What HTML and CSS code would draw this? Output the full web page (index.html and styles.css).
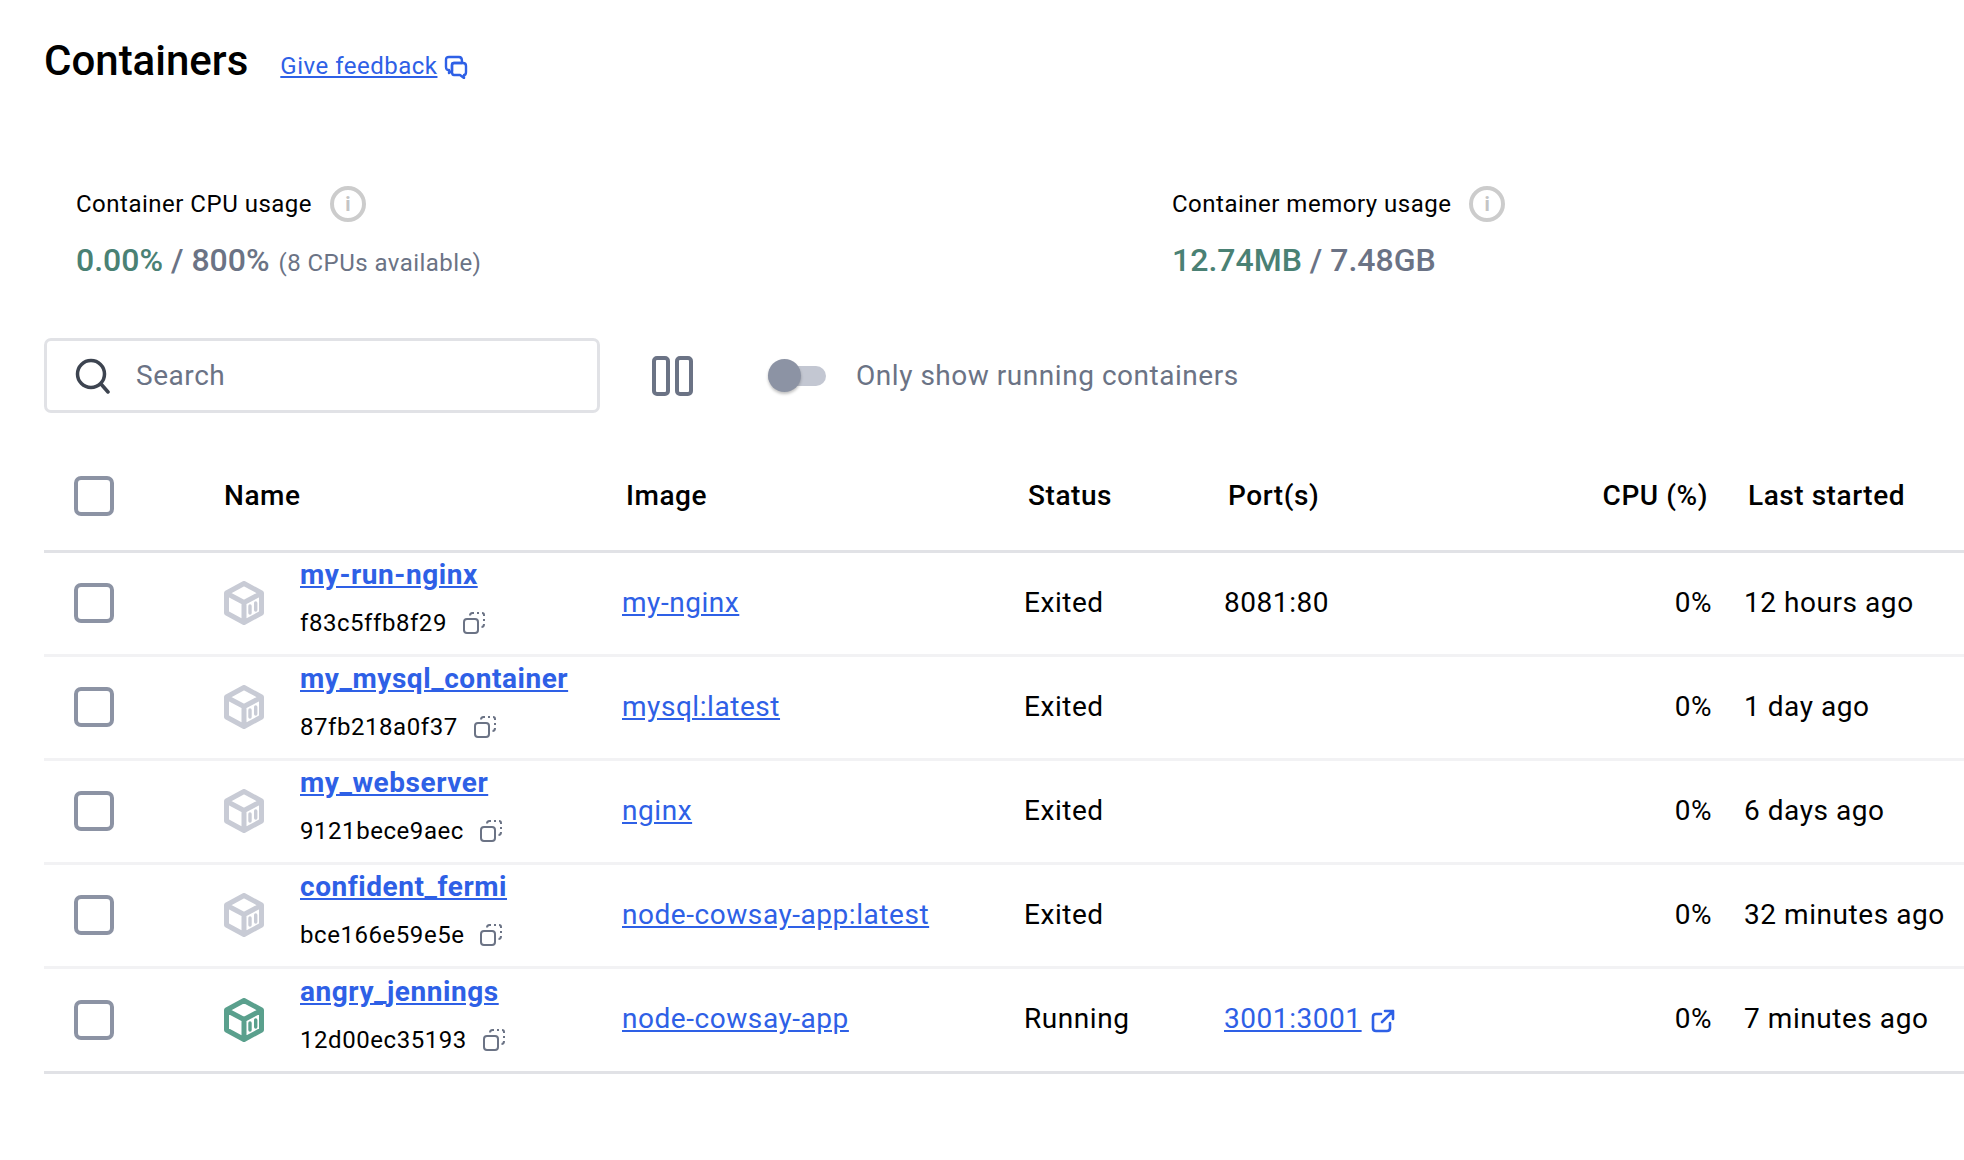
FILE: index.html
```html
<!DOCTYPE html>
<html lang="en">
<head>
  <meta charset="UTF-8" />
  <title>Containers</title>
  <link rel="stylesheet" href="styles.css">
</head>
<body>
  <svg class="defs" width="0" height="0">
    <symbol id="cube" viewBox="0 0 40 44">
      <path d="M20 2.500 L37.500 12 V32 L20 41.500 L2.500 32 V12 Z M3 12.500 L20 21.500 L37 12.500 M20 21.500 V41" fill="none" stroke="currentColor" stroke-width="5" stroke-linejoin="round" />
      <path d="M26 25 V32 M31.700 22 V29" fill="none" stroke="currentColor" stroke-width="3.400" stroke-linecap="round" />
    </symbol>
    <symbol id="copy" viewBox="0 0 22 22">
      <rect x="1" y="7" width="14" height="14" rx="3" fill="none" stroke="currentColor" stroke-width="2" />
      <path d="M7 3.500 C7 2 8 1 9.500 1 H11 M14 1 H16 M19 1 C20.300 1 21 2 21 3 V4 M21 7 V9 M21 12 C21 14 20 15 18.500 15" fill="none" stroke="currentColor" stroke-width="2" />
    </symbol>
  </svg>

  <header class="top">
    <h1>Containers</h1>
    <a class="feedback" href="#">Give feedback</a>
    <svg class="feedback-icon" viewBox="0 0 24 24" width="24" height="24" fill="none" stroke="currentColor" stroke-width="2.400" stroke-linejoin="round">
      <path d="M5 2 H15 C17 2 18 3 18 6 V8 H10 C8.500 8 8 9 8 10 V16 L5 18 V15 C3 15 2 14 2 12 V5 C2 3 3 2 5 2 Z" />
      <path d="M10 8 H19 C21 8 22 9 22 11 V17 C22 19 21 20 20 20 V23 L16 20 H10 C9 20 8 19 8 17 V10 C8 9 9 8 10 8 Z" />
    </svg>
  </header>

  <section class="stats">
    <div class="stat">
      <div class="stat-label">Container CPU usage <span class="info">i</span></div>
      <div class="stat-value"><span class="used">0.00%</span> / 800% <small>(8 CPUs available)</small></div>
    </div>
    <div class="stat">
      <div class="stat-label">Container memory usage <span class="info">i</span></div>
      <div class="stat-value"><span class="used">12.74MB</span> / 7.48GB</div>
    </div>
  </section>

  <section class="toolbar">
    <div class="search">
      <svg viewBox="0 0 36 36" width="36" height="36" fill="none" stroke="#3d4450" stroke-width="3.500" stroke-linecap="round">
        <circle cx="16" cy="16" r="13.500" />
        <path d="M26 26 L33 34" />
      </svg>
      <span>Search</span>
    </div>
    <div class="pause"><i></i><i></i></div>
    <div class="toggle"><i></i></div>
    <span class="toggle-label">Only show running containers</span>
  </section>

  <table class="containers">
    <colgroup>
      <col class="c-check"><col class="c-name"><col class="c-image"><col class="c-status"><col class="c-ports"><col class="c-cpu"><col class="c-last">
    </colgroup>
    <thead>
      <tr>
        <th class="flush"><span class="check"></span></th>
        <th class="flush">Name</th>
        <th>Image</th>
        <th>Status</th>
        <th>Port(s)</th>
        <th class="num">CPU (%)</th>
        <th class="last">Last started</th>
      </tr>
    </thead>
    <tbody>
      <tr>
        <td><span class="check"></span></td>
        <td><div class="name-cell"><svg class="cube"><use href="#cube" /></svg><div class="name-text"><a class="name" href="#">my-run-nginx</a><div class="cid">f83c5ffb8f29 <svg class="copy"><use href="#copy" /></svg></div></div></div></td>
        <td><a href="#">my-nginx</a></td>
        <td>Exited</td>
        <td>8081:80</td>
        <td class="num">0%</td>
        <td class="last">12 hours ago</td>
      </tr>
      <tr>
        <td><span class="check"></span></td>
        <td><div class="name-cell"><svg class="cube"><use href="#cube" /></svg><div class="name-text"><a class="name" href="#">my_mysql_container</a><div class="cid">87fb218a0f37 <svg class="copy"><use href="#copy" /></svg></div></div></div></td>
        <td><a href="#">mysql:latest</a></td>
        <td>Exited</td>
        <td></td>
        <td class="num">0%</td>
        <td class="last">1 day ago</td>
      </tr>
      <tr>
        <td><span class="check"></span></td>
        <td><div class="name-cell"><svg class="cube"><use href="#cube" /></svg><div class="name-text"><a class="name" href="#">my_webserver</a><div class="cid">9121bece9aec <svg class="copy"><use href="#copy" /></svg></div></div></div></td>
        <td><a href="#">nginx</a></td>
        <td>Exited</td>
        <td></td>
        <td class="num">0%</td>
        <td class="last">6 days ago</td>
      </tr>
      <tr>
        <td><span class="check"></span></td>
        <td><div class="name-cell"><svg class="cube"><use href="#cube" /></svg><div class="name-text"><a class="name" href="#">confident_fermi</a><div class="cid">bce166e59e5e <svg class="copy"><use href="#copy" /></svg></div></div></div></td>
        <td><a href="#">node-cowsay-app:latest</a></td>
        <td>Exited</td>
        <td></td>
        <td class="num">0%</td>
        <td class="last">32 minutes ago</td>
      </tr>
      <tr>
        <td><span class="check"></span></td>
        <td><div class="name-cell"><svg class="cube running"><use href="#cube" /></svg><div class="name-text"><a class="name" href="#">angry_jennings</a><div class="cid">12d00ec35193 <svg class="copy"><use href="#copy" /></svg></div></div></div></td>
        <td><a href="#">node-cowsay-app</a></td>
        <td>Running</td>
        <td><a href="#">3001:3001</a>
          <svg class="ext" viewBox="0 0 24 24" width="24" height="24" fill="none" stroke="currentColor" stroke-width="2.600" stroke-linecap="round" stroke-linejoin="round">
            <path d="M10 5 H5 C3 5 2 6 2 8 V19 C2 21 3 22 5 22 H16 C18 22 19 21 19 19 V14" />
            <path d="M11 13 L22 2 M14 2 H22 V10" />
          </svg>
        </td>
        <td class="num">0%</td>
        <td class="last">7 minutes ago</td>
      </tr>
    </tbody>
  </table>
</body>
</html>
```

FILE: styles.css
```css
html, body {
  margin: 0;
  padding: 0;
  background: #fff;
  overflow: hidden;
}
body {
  width: 1964px;
  height: 1160px;
  font-family: Roboto, sans-serif;
  font-size: 28px;
  letter-spacing: 0.55px;
  color: #000;
}
a {
  color: #2e60e6;
}
.defs {
  display: block;
  height: 0;
}

.top {
  display: flex;
  align-items: center;
  height: 120px;
  padding-left: 44px;
}
.top h1 {
  margin: 0 32px 0 0;
  font-size: 42px;
  font-weight: 500;
  letter-spacing: 0;
}
.feedback {
  font-size: 24px;
  letter-spacing: 0.5px;
  margin-top: 12px;
}
.feedback-icon {
  margin: 14px 0 0 7px;
  color: #2e60e6;
}

.stats {
  display: grid;
  grid-template-columns: 1096px 1fr;
  padding: 64px 0 0 76px;
  height: 154px;
  box-sizing: border-box;
}
.stat-label {
  display: flex;
  align-items: center;
  font-size: 24px;
  letter-spacing: 0.5px;
  height: 40px;
}
.info {
  display: inline-block;
  box-sizing: border-box;
  width: 36px;
  height: 36px;
  margin-left: 18px;
  border: 4px solid #cccccc;
  border-radius: 50%;
  color: #c4c4c4;
  font-size: 20px;
  font-weight: 700;
  line-height: 28px;
  text-align: center;
}
.stat-value {
  margin-top: 17px;
  font-size: 32px;
  font-weight: 500;
  letter-spacing: 0;
  color: #6b7385;
}
.stat-value small {
  margin-left: 1px;
  font-size: 24px;
  font-weight: 400;
  letter-spacing: 0.45px;
}
.used {
  color: #4a8174;
}

.toolbar {
  display: flex;
  align-items: center;
  padding-left: 44px;
  height: 75px;
  margin-top: 64px;
}
.search {
  box-sizing: border-box;
  width: 556px;
  height: 75px;
  display: flex;
  align-items: center;
  padding-left: 28px;
  border: 3px solid #e1e2e6;
  border-radius: 7px;
  color: #6b7385;
}
.search span {
  margin-left: 25px;
}
.pause {
  display: flex;
  gap: 5px;
  margin-left: 52px;
}
.pause i {
  display: block;
  box-sizing: border-box;
  width: 18px;
  height: 40px;
  border: 4px solid #6b7385;
  border-radius: 5px;
}
.toggle {
  position: relative;
  width: 58px;
  height: 20px;
  margin-left: 75px;
  background: #c3c7d2;
  border-radius: 10px;
}
.toggle i {
  position: absolute;
  left: 0;
  top: -7px;
  width: 33px;
  height: 33px;
  background: #8c93a4;
  border-radius: 50%;
  box-shadow: 0 2px 3px rgba(0, 0, 0, 0.25);
}
.toggle-label {
  margin-left: 30px;
  letter-spacing: 0.53px;
  color: #6b7385;
}

.containers {
  margin: 35px 0 0 44px;
  width: 1920px;
  table-layout: fixed;
  border-collapse: collapse;
}
.c-check { width: 180px; }
.c-name { width: 398px; }
.c-image { width: 402px; }
.c-status { width: 200px; }
.c-ports { width: 300px; }
.c-cpu { width: 188px; }
.containers th {
  height: 103px;
  padding: 0 0 6px 4px;
  box-sizing: border-box;
  text-align: left;
  font-weight: 500;
  white-space: nowrap;
  border-bottom: 3px solid #e1e2e6;
}
.containers th.flush {
  padding-left: 0;
}
.containers td {
  height: 104px;
  box-sizing: border-box;
  padding: 0 0 2px;
  border-bottom: 3px solid #f2f2f4;
  white-space: nowrap;
}
.containers tbody tr:last-child td {
  height: 105px;
  border-bottom-color: #e1e2e6;
}
.containers .num {
  text-align: right;
}
.containers th.num {
  padding-right: 4px;
}
.containers .last {
  padding-left: 32px;
}
.containers th.last {
  padding-left: 36px;
}
.check {
  display: block;
  box-sizing: border-box;
  width: 40px;
  height: 40px;
  margin-left: 30px;
  border: 4px solid #8c93a4;
  border-radius: 7px;
}
td .check {
  margin-top: 2px;
}
.name-cell {
  display: flex;
  align-items: center;
  gap: 36px;
}
.cube {
  flex: none;
  width: 40px;
  height: 44px;
  margin-top: 2px;
  color: #c8cbd5;
}
.cube.running {
  color: #5aa08d;
}
.name-text {
  padding-bottom: 7px;
}
.name {
  display: block;
  font-weight: 700;
  line-height: 34px;
}
.cid {
  display: flex;
  align-items: center;
  gap: 16px;
  margin-top: 15px;
  font-size: 24px;
  line-height: 32px;
}
.copy {
  width: 22px;
  height: 22px;
  color: #6b7385;
}
.ext {
  margin-left: 2px;
  vertical-align: -5px;
  color: #2e60e6;
}
```
